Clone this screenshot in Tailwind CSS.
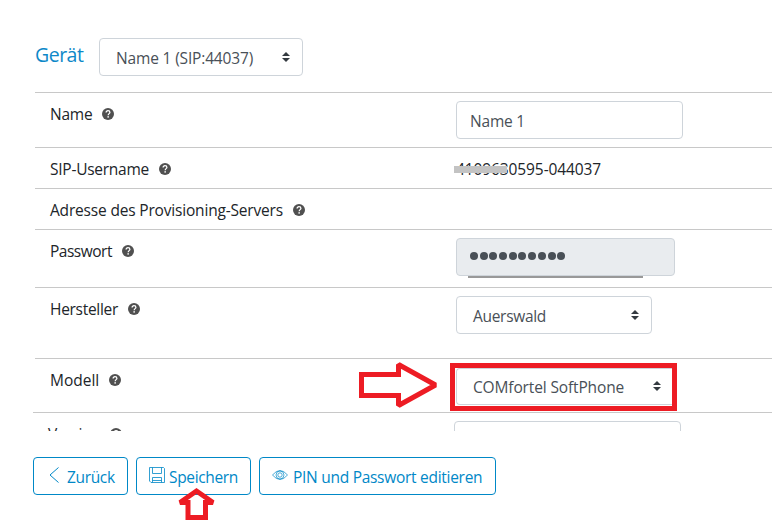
<!DOCTYPE html>
<html lang="de">
<head>
  <meta charset="UTF-8" />
  <meta name="viewport" content="width=device-width, initial-scale=1" />
  <title>Gerät</title>
  <script src="https://cdn.jsdelivr.net/npm/@tailwindcss/browser@4"></script>
</head>
<body class="relative h-[520px] overflow-hidden bg-white font-['Open_Sans','Noto_Sans',sans-serif] text-[15.5px] leading-6 text-[#212529]">

  <!-- Shared icons -->
  <svg class="hidden">
    <symbol id="help" viewBox="0 0 12 12">
      <circle cx="6" cy="6" r="6" fill="#505050" />
      <path d="M4.1 4.6C4.1 3.3 4.9 2.7 6 2.7s1.9.7 1.9 1.7C7.9 5.6 6.2 5.7 6.2 7.2" fill="none" stroke="#fff" stroke-width="1.3" />
      <rect x="5.4" y="8.2" width="1.5" height="1.4" fill="#fff" />
    </symbol>
    <symbol id="caret" viewBox="0 0 8 10">
      <path d="M4 0L8 4H0zM4 10L0 6h8z" fill="#343a40" />
    </symbol>
  </svg>

  <header class="flex h-[92px] pl-[35px] pt-[38px]">
    <h1 class="w-16 whitespace-nowrap pt-[3px] text-[19.5px] leading-7 tracking-[-0.5px] text-[#0d88c8]">Gerät</h1>
    <div class="flex h-[38px] w-[204px] items-center justify-between rounded border border-[#ced4da] pl-4 pr-3 text-[#495057]">
      <span class="whitespace-nowrap pt-0.5 tracking-[-0.16px]">Name 1 (SIP:44037)</span>
      <svg class="h-[10px] w-2"><use href="#caret" /></svg>
    </div>
  </header>

  <main class="h-[339px] overflow-hidden">
    <div class="ml-[35px] flex h-[55px] border-t border-[#c8c8c8] pl-[15px]">
      <div class="mt-[9px] flex h-6 w-[406px] items-center gap-[10px]">
        <span class="tracking-[-0.25px]">Name</span>
        <svg class="size-3"><use href="#help" /></svg>
      </div>
      <div class="mt-2 flex h-[38px] w-[227px] items-center rounded border border-[#ced4da] pl-[13px] pt-0.5 tracking-[-0.2px] text-[#495057]">Name 1</div>
    </div>

    <div class="ml-[35px] flex h-[41px] border-t border-[#c8c8c8] pl-[15px]">
      <div class="mt-[9px] flex h-6 w-[406px] items-center gap-[10px]">
        <span class="tracking-[-0.25px]">SIP-Username</span>
        <svg class="size-3"><use href="#help" /></svg>
      </div>
      <div class="relative mt-[9px] h-6 tracking-[-0.1px]">
        4109630595-044037
        <span class="absolute -left-0.5 top-[9px] h-[7px] w-[53px] bg-[#c3c3c3]"></span>
      </div>
    </div>

    <div class="ml-[35px] flex h-[41px] border-t border-[#c8c8c8] pl-[15px]">
      <div class="mt-[9px] flex h-6 w-[406px] items-center gap-[10px]">
        <span class="tracking-[-0.18px]">Adresse des Provisioning-Servers</span>
        <svg class="size-3"><use href="#help" /></svg>
      </div>
    </div>

    <div class="ml-[35px] flex h-[58px] border-t border-[#c8c8c8] pl-[15px]">
      <div class="mt-[9px] flex h-6 w-[406px] items-center gap-[10px]">
        <span class="tracking-[-0.5px]">Passwort</span>
        <svg class="size-3"><use href="#help" /></svg>
      </div>
      <div class="mt-2">
        <div class="flex h-[38px] w-[219px] items-center gap-[1.7px] rounded border border-[#ced4da] bg-[#e9ecef] pb-0.5 pl-[13px]">
          <span class="size-2 rounded-full bg-[#495057]"></span>
          <span class="size-2 rounded-full bg-[#495057]"></span>
          <span class="size-2 rounded-full bg-[#495057]"></span>
          <span class="size-2 rounded-full bg-[#495057]"></span>
          <span class="size-2 rounded-full bg-[#495057]"></span>
          <span class="size-2 rounded-full bg-[#495057]"></span>
          <span class="size-2 rounded-full bg-[#495057]"></span>
          <span class="size-2 rounded-full bg-[#495057]"></span>
          <span class="size-2 rounded-full bg-[#495057]"></span>
          <span class="size-2 rounded-full bg-[#495057]"></span>
        </div>
        <div class="ml-3 h-0.5 w-[175px] bg-[#999]"></div>
      </div>
    </div>

    <div class="ml-[35px] flex h-[71px] border-t border-[#c8c8c8] pl-[15px]">
      <div class="mt-[9px] flex h-6 w-[406px] items-center gap-[10px]">
        <span class="tracking-[-0.3px]">Hersteller</span>
        <svg class="size-3"><use href="#help" /></svg>
      </div>
      <div class="mt-2 flex h-[38px] w-[196px] items-center justify-between rounded border border-[#ced4da] pl-4 pr-3 text-[#495057]">
        <span class="pt-0.5 tracking-[-0.3px]">Auerswald</span>
        <svg class="h-[10px] w-2"><use href="#caret" /></svg>
      </div>
    </div>

    <div class="ml-[35px] flex h-[54px] border-t border-[#c8c8c8] pl-[15px]">
      <div class="mt-[9px] flex h-6 w-[400px] items-center gap-[10px]">
        <span>Modell</span>
        <svg class="size-3"><use href="#help" /></svg>
      </div>
      <!-- Highlighted model select -->
      <div class="mt-1 h-12 w-[227px] border-5 border-[#ed1c24] pl-px">
        <div class="flex h-[37px] w-full items-center justify-between rounded-l border-y border-l border-[#ced4da] pl-4 pr-[11px] text-[#495057]">
          <span class="whitespace-nowrap tracking-[-0.14px]">COMfortel SoftPhone</span>
          <svg class="mb-0.5 h-[10px] w-2"><use href="#caret" /></svg>
        </div>
      </div>
    </div>

    <div class="ml-[33px] flex h-[55px] border-t border-[#c8c8c8] pl-[15px]">
      <div class="mt-[9px] flex h-6 w-[406px] items-center gap-[10px]">
        <span class="tracking-[-0.3px]">Version</span>
        <svg class="size-3"><use href="#help" /></svg>
      </div>
      <div class="mt-2 h-[38px] w-[227px] rounded border border-[#ced4da]"></div>
    </div>
  </main>

  <footer class="flex gap-2 pl-[33px] pt-[26px] text-[#0088c7]">
    <button class="flex h-[38px] w-[95px] items-center rounded border border-[#0088c7] pl-[15px]">
      <svg class="mb-0.5 h-4 w-[10px]" viewBox="0 0 10 16" fill="none" stroke="currentColor"><path d="M9.500 .5L1 8l8.500 7.500" /></svg>
      <span class="ml-2 pt-0.5 tracking-[-0.35px]">Zurück</span>
    </button>
    <button class="flex h-[38px] w-[115px] items-center rounded border border-[#0088c7] pl-3">
      <svg class="mb-0.5 size-4" viewBox="0 0 16 16" fill="none" stroke="currentColor" stroke-width=".8"><path d="M.5.5h14l1 1v14H2l-1.500-1.500zM3.500.5v6h9v-6M3.500 15.500v-5h9v5M3.500 13.500h9" /></svg>
      <span class="ml-1 pt-0.5 tracking-[-0.35px]">Speichern</span>
    </button>
    <button class="flex h-[38px] w-[237px] items-center rounded border border-[#0088c7] pl-3">
      <svg class="mb-[3px] h-[10px] w-4" viewBox="0 0 16 10" fill="none" stroke="currentColor" stroke-width=".7"><path d="M.5 5Q8-4 15.500 5Q8 14 .5 5z" /><circle cx="8" cy="5" r="4" /><circle cx="8" cy="5" r="2.200" /></svg>
      <span class="ml-[5px] whitespace-nowrap pt-0.5 tracking-[-0.28px]">PIN und Passwort editieren</span>
    </button>
  </footer>

  <!-- Pointer arrows over the form -->
  <svg class="absolute left-[358px] top-[360px] h-[50px] w-[82px]" fill="none" stroke="#ed1c24" stroke-width="5"><path d="M3.500 14.500h37V4.500L77.500 25 40.500 45.500v-10h-37z" stroke-miterlimit="1.5" /></svg>
  <svg class="absolute left-[175px] top-[487px] h-[33px] w-[44px]" fill="none" stroke="#ed1c24" stroke-width="5"><path d="M21.500 4L5 15.500h8v15h17.500v-15H38z" stroke-miterlimit="1.5" /></svg>
</body>
</html>
